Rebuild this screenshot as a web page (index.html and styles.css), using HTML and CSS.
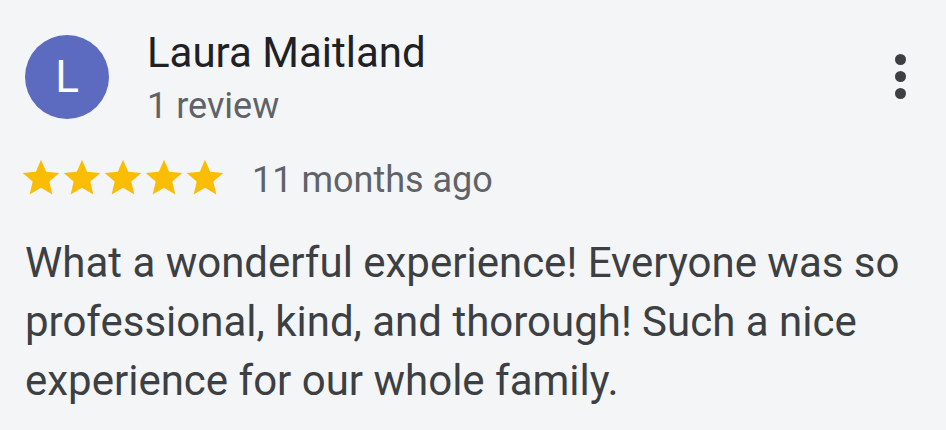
FILE: index.html
```html
<!DOCTYPE html>
<html lang="en">
  <head>
    <meta charset="UTF-8" />
    <meta name="viewport" content="width=device-width, initial-scale=1.0" />
    <title>Review</title>
    <link rel="stylesheet" href="styles.css">
  </head>
  <body>
    <div class="review">
      <div class="review-head">
        <div class="avatar">L</div>
        <div class="author">
          <div class="author-name">Laura Maitland</div>
          <div class="author-meta">1 review</div>
        </div>
        <div class="menu" aria-label="More">
          <span class="dot"></span>
          <span class="dot"></span>
          <span class="dot"></span>
        </div>
      </div>

      <div class="rating">
        <div class="stars">
          <svg viewBox="0 0 24 24"><path d="M12 17.27L18.18 21l-1.64-7.03L22 9.24l-7.19-.61L12 2 9.19 8.63 2 9.24l5.46 4.73L5.82 21z"/></svg>
          <svg viewBox="0 0 24 24"><path d="M12 17.27L18.18 21l-1.64-7.03L22 9.24l-7.19-.61L12 2 9.19 8.63 2 9.24l5.46 4.73L5.82 21z"/></svg>
          <svg viewBox="0 0 24 24"><path d="M12 17.27L18.18 21l-1.64-7.03L22 9.24l-7.19-.61L12 2 9.19 8.63 2 9.24l5.46 4.73L5.82 21z"/></svg>
          <svg viewBox="0 0 24 24"><path d="M12 17.27L18.18 21l-1.64-7.03L22 9.24l-7.19-.61L12 2 9.19 8.63 2 9.24l5.46 4.73L5.82 21z"/></svg>
          <svg viewBox="0 0 24 24"><path d="M12 17.27L18.18 21l-1.64-7.03L22 9.24l-7.19-.61L12 2 9.19 8.63 2 9.24l5.46 4.73L5.82 21z"/></svg>
        </div>
        <span class="date">11 months ago</span>
      </div>

      <p class="review-text">What a wonderful experience! Everyone was so professional, kind, and thorough! Such a nice experience for our whole family.</p>
    </div>
  </body>
</html>
```

FILE: styles.css
```css
body {
  margin: 0;
  background: #f4f5f7;
  font-family: Roboto, "Liberation Sans", sans-serif;
  color: #3c4043;
}

.review {
  padding: 35px 40px 0 25px;
}

.review-head {
  display: flex;
  align-items: flex-start;
}

.avatar {
  width: 84px;
  height: 84px;
  border-radius: 50%;
  background: #5c6bc0;
  color: #fff;
  font-size: 44px;
  display: flex;
  align-items: center;
  justify-content: center;
  flex-shrink: 0;
}

.author {
  flex: 1;
  margin-left: 38px;
  margin-top: -6px;
}

.author-name {
  font-size: 42px;
  line-height: 48px;
  color: #202124;
}

.author-meta {
  font-size: 36px;
  line-height: 44px;
  margin-top: 7px;
  color: #5f6368;
}

.menu {
  display: flex;
  flex-direction: column;
  align-items: center;
  gap: 6px;
  margin-top: 19px;
}

.dot {
  width: 11px;
  height: 11px;
  border-radius: 50%;
  background: #3c4043;
}

.rating {
  display: flex;
  align-items: center;
  height: 44px;
  margin-top: 28px;
  margin-left: -6px;
}

.stars {
  display: flex;
}

.stars svg {
  width: 44px;
  height: 44px;
  margin-right: -3px;
  fill: #fbbc04;
}

.date {
  font-size: 36px;
  line-height: 44px;
  padding-top: 3px;
  color: #5f6368;
  margin-left: 28px;
}

.review-text {
  margin: 33px 0 0;
  font-size: 42px;
  line-height: 59px;
}
```
